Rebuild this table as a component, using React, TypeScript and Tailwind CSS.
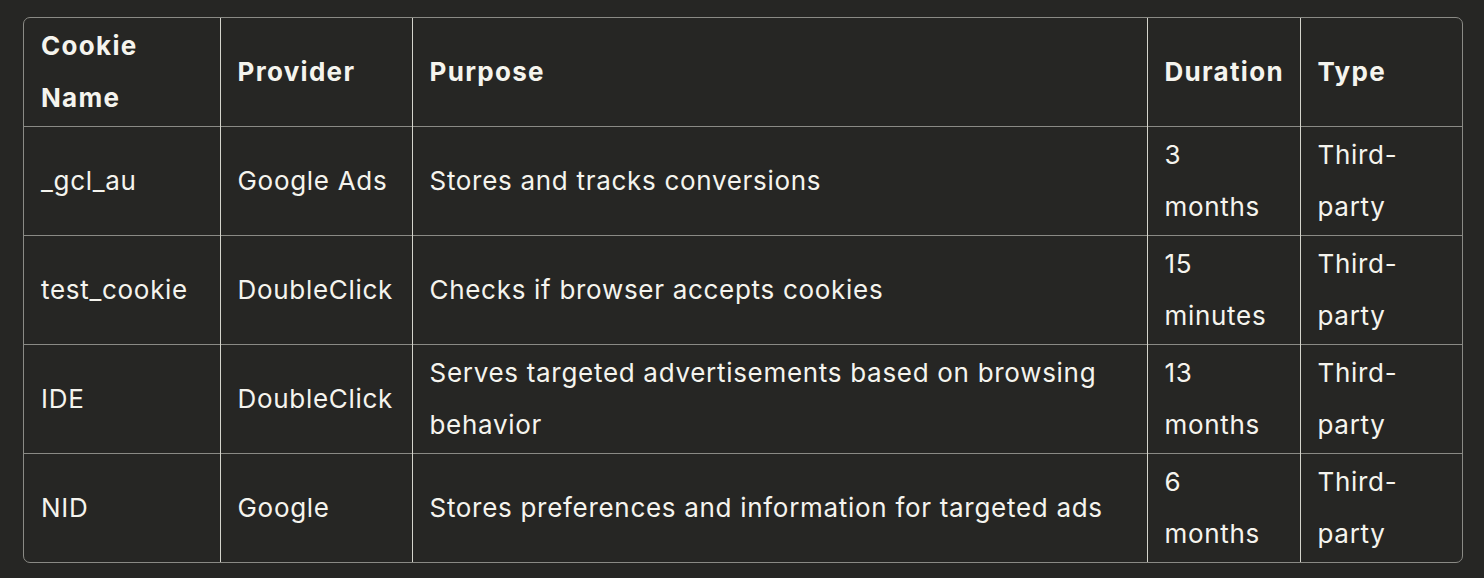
import React from "react";

interface CookieRow {
    name: string;
    provider: string;
    purpose: string;
    duration: string;
    type: string;
}

const rows: CookieRow[] = [
    { name: "_gcl_au", provider: "Google Ads", purpose: "Stores and tracks conversions", duration: "3 months", type: "Third-party" },
    { name: "test_cookie", provider: "DoubleClick", purpose: "Checks if browser accepts cookies", duration: "15 minutes", type: "Third-party" },
    { name: "IDE", provider: "DoubleClick", purpose: "Serves targeted advertisements based on browsing behavior", duration: "13 months", type: "Third-party" },
    { name: "NID", provider: "Google", purpose: "Stores preferences and information for targeted ads", duration: "6 months", type: "Third-party" },
];

const headers = ["Cookie Name", "Provider", "Purpose", "Duration", "Type"];
const widths = ["w-[196px]", "w-[192px]", "w-[735px]", "w-[153px]", "w-[163px]"];

const App: React.FC = () => {
    return (
        <div className="min-h-[578px] bg-[#262624] pt-[17px] pl-[23px] font-['Inter',sans-serif] text-[#f5f4ee]">
            {/* table card with rounded outer border */}
            <div className="w-[1440px] overflow-hidden rounded-[7px] border border-[#8a8a85]">
                <table className="w-full table-fixed border-collapse text-[26px] leading-[52px]">
                    <thead>
                        <tr className="h-[108px]">
                            {headers.map((h, i) => (
                                <th
                                    key={h}
                                    className={`${widths[i]} pl-[17px] pr-[14px] text-left align-middle font-bold tracking-[1.3px] ${i > 0 ? "border-l border-l-[#d4d4cc]" : ""}`}
                                >
                                    {h}
                                </th>
                            ))}
                        </tr>
                    </thead>
                    <tbody>
                        {rows.map((r) => (
                            <tr key={r.name} className="h-[109px] border-t border-t-[#8a8a85]">
                                {[r.name, r.provider, r.purpose, r.duration, r.type].map((c, i) => (
                                    <td
                                        key={i}
                                        className={`pl-[17px] pr-[14px] align-middle font-normal tracking-[0.7px] ${i > 0 ? "border-l border-l-[#d4d4cc]" : ""}`}
                                    >
                                        {i === 3 ? <span className="block max-w-[110px]">{c}</span> : c}
                                    </td>
                                ))}
                            </tr>
                        ))}
                    </tbody>
                </table>
            </div>
        </div>
    );
};

export default App;
